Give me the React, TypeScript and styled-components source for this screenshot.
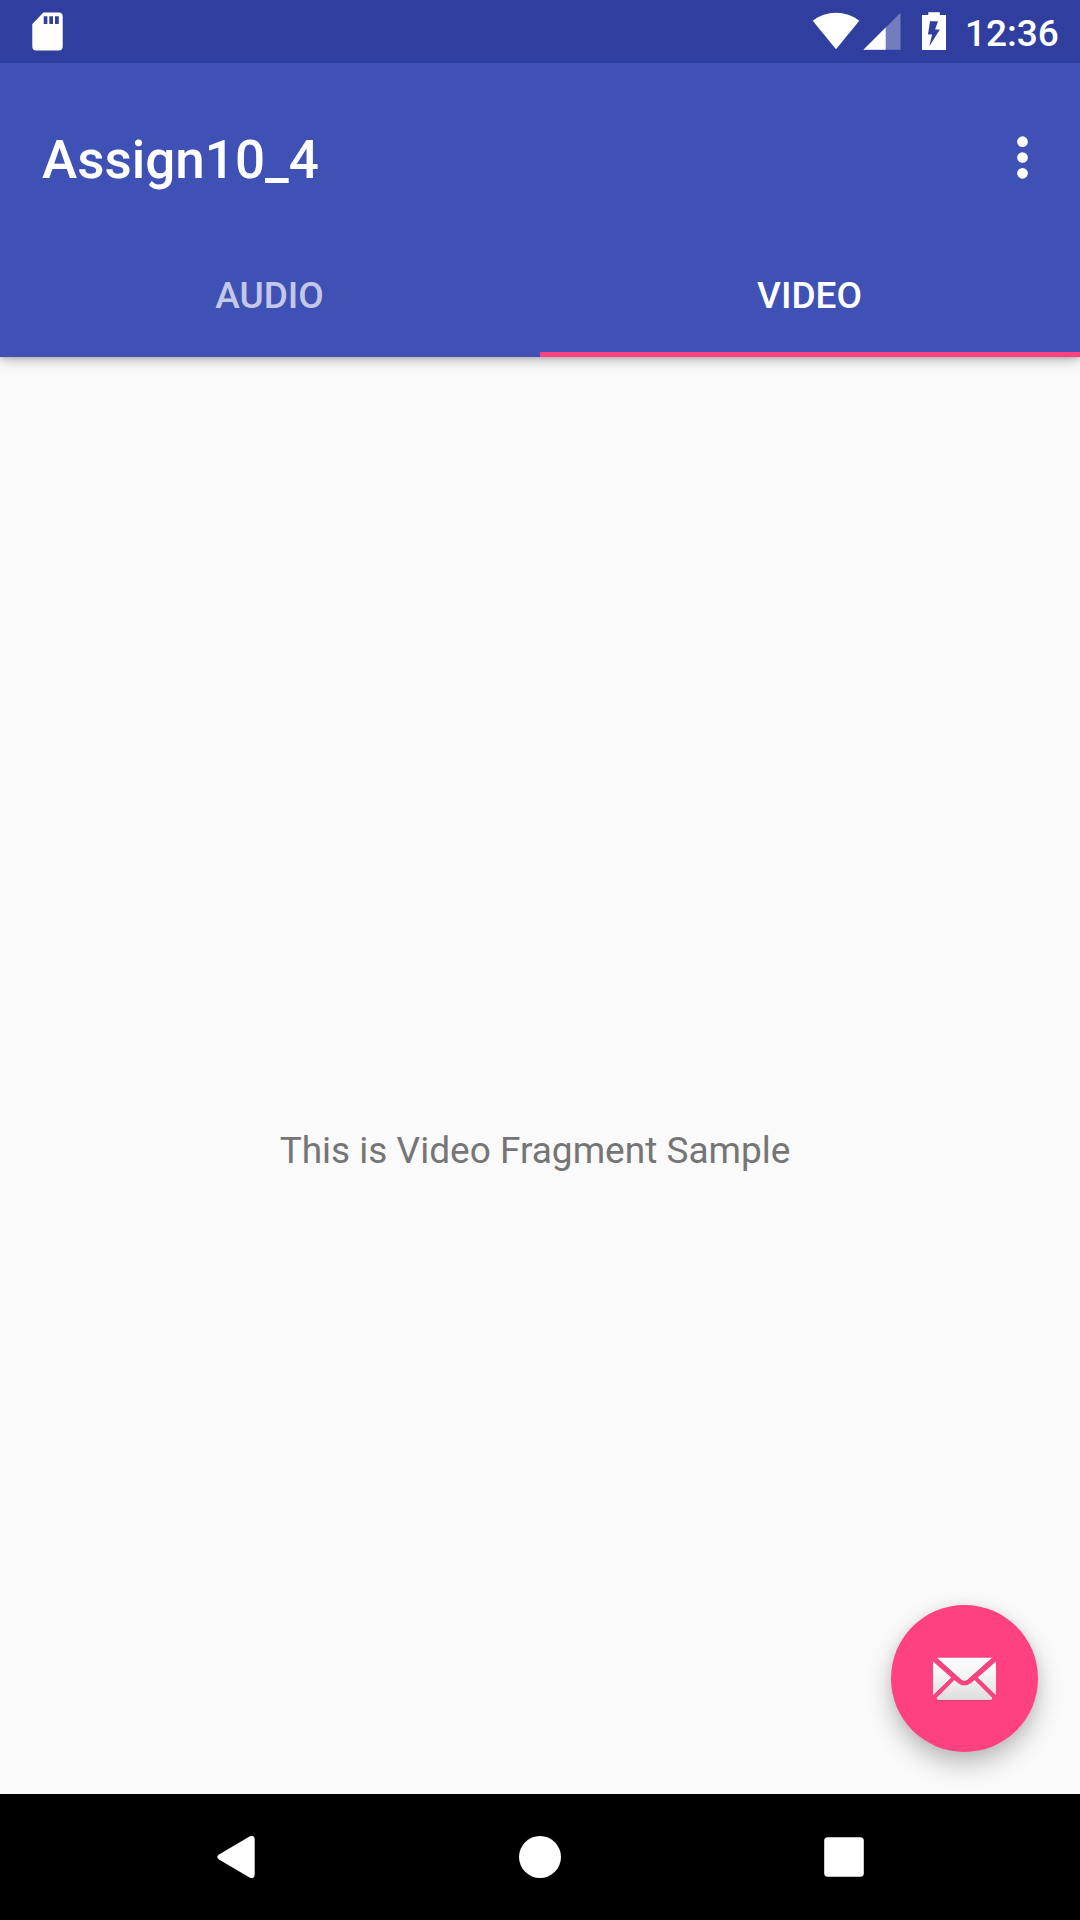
import React from "react";
import styled, { createGlobalStyle } from "styled-components";

const GlobalStyle = createGlobalStyle`
  *, *::before, *::after { box-sizing: border-box; }
  body { margin: 0; background: #fafafa; font-family: Roboto, "Liberation Sans", sans-serif; }
  svg { display: block; flex: none; }
`;

const Screen = styled.div`
  display: flex;
  flex-direction: column;
  width: 1080px;
  height: 1920px;
  overflow: hidden;
  background: #fafafa;
`;

const StatusBar = styled.header`
  position: relative;
  z-index: 2;
  display: flex;
  justify-content: space-between;
  flex: none;
  height: 63px;
  padding: 0 21px 0 28px;
  background: #303f9f;
`;

const StatusGroup = styled.div`
  display: flex;
  align-items: center;
`;

const Clock = styled.time`
  width: 94px;
  margin-left: 17px;
  padding-top: 4px;
  color: #fff;
  font-size: 37px;
  font-weight: 500;
  line-height: 43px;
  white-space: nowrap;
`;

const AppBar = styled.div`
  position: relative;
  z-index: 1;
  flex: none;
  height: 294px;
  padding-top: 21px;
  background: #3f51b5;
  box-shadow: 0 3px 12px rgba(0, 0, 0, 0.27), 0 1px 4px rgba(0, 0, 0, 0.14);
`;

const Toolbar = styled.div`
  display: flex;
  align-items: center;
  justify-content: space-between;
  height: 147px;
  padding-left: 42px;
`;

const Title = styled.h1`
  margin: 0;
  padding-top: 5px;
  color: #fff;
  font-size: 53px;
  font-weight: 500;
  line-height: 62px;
`;

const IconButton = styled.button<{ $width: number }>`
  display: flex;
  align-items: center;
  justify-content: center;
  width: ${({ $width }) => $width}px;
  height: 126px;
  padding: 0;
  border: 0;
  background: transparent;
`;

const TabRow = styled.nav`
  display: grid;
  grid-template-columns: 1fr 1fr;
  height: 126px;
`;

const Tab = styled.button<{ $active?: boolean }>`
  padding: 8px 1px 0 0;
  border: 0;
  border-bottom: 5px solid ${({ $active }) => ($active ? "#ff4081" : "transparent")};
  background: transparent;
  color: ${({ $active }) => ($active ? "#fff" : "rgba(255, 255, 255, 0.7)")};
  font: 500 37px/43px Roboto, "Liberation Sans", sans-serif;
`;

const Content = styled.main`
  position: relative;
  display: flex;
  flex: 1;
  align-items: center;
  justify-content: center;
`;

const Message = styled.p`
  margin: 0;
  padding: 150px 10px 0 0;
  color: #757575;
  font-size: 37px;
  line-height: 43px;
  white-space: nowrap;
`;

const ComposeButton = styled.button`
  position: absolute;
  right: 42px;
  bottom: 42px;
  display: flex;
  align-items: center;
  justify-content: center;
  width: 147px;
  height: 147px;
  padding: 0;
  border: 0;
  border-radius: 50%;
  background: #ff4081;
  box-shadow: 0 12px 24px rgba(0, 0, 0, 0.25), 0 0 12px rgba(0, 0, 0, 0.06);
`;

const NavigationBar = styled.footer`
  position: relative;
  z-index: 1;
  display: flex;
  flex: none;
  align-items: center;
  justify-content: center;
  gap: 94px;
  height: 126px;
  background: #000;
`;

const SdCard = () => (
  <svg width="40" height="63" viewBox="28 0 40 63">
    <path fill="#fff" fillRule="evenodd" d="M43.400 12.500H58.700a4 4 0 0 1 4 4V46.600a4 4 0 0 1-4 4H36.300a4 4 0 0 1-4-4V24ZM43.700 16.300V24h3.700v-7.700ZM49.300 16.300V24H53v-7.700ZM55 16.300V24h3.800v-7.700Z" />
  </svg>
);

const StatusIcons = () => (
  <svg width="138" height="63" viewBox="810 0 138 63">
    <path fill="#fff" d="M812.700 20.800C826 10.100 846 10.100 859.300 20.800L836 49.300Z" />
    <path fill="#fff" fillOpacity=".32" d="M900.500 12.700V49.800H863.400Z" />
    <path fill="#fff" d="M885.700 27.500V49.800H863.400Z" />
    <path fill="#fff" fillRule="evenodd" d="M928.300 12.300h11.500V15.100H946V49.900H922V15.100h6.300ZM930 21.200L928 34.500h4.100L929.200 46.600 939.800 29.500h-4.700L938 21.200Z" />
  </svg>
);

const Overflow = () => (
  <svg width="17" height="46" viewBox="0 0 17 46" fill="#fff">
    <circle cx="8.500" cy="6.700" r="5.350" />
    <circle cx="8.500" cy="22.500" r="5.350" />
    <circle cx="8.500" cy="38.300" r="5.350" />
  </svg>
);

const Envelope = () => (
  <svg width="65" height="49" viewBox="932 1654 65 49">
    <defs>
      <linearGradient id="paper" gradientUnits="userSpaceOnUse" x1="0" y1="1657" x2="0" y2="1701">
        <stop offset="0" stopColor="#fff" />
        <stop offset=".4" stopColor="#f5f5f5" />
        <stop offset="1" stopColor="#dcdcdc" />
      </linearGradient>
      <filter id="edge" x="-10%" y="-10%" width="120%" height="120%">
        <feDropShadow dx="0" dy=".4" stdDeviation=".5" floodColor="#444" floodOpacity=".6" />
      </filter>
    </defs>
    <g fill="url(#paper)" filter="url(#edge)">
      <path d="M937 1657.700H992L967.300 1679.700Q964.400 1682 961.500 1679.700Z" />
      <path d="M933 1661.500L951.200 1677.500 933 1695.200Z" />
      <path d="M996 1661.500V1695.200L977.800 1677.500Z" />
      <path d="M954.400 1679.900L958.200 1683.200Q964.500 1688 970.800 1683.200L974.500 1679.900 992.200 1697.800Q992.700 1699.900 990.500 1699.900H938.500Q936.300 1699.900 936.800 1697.800Z" />
    </g>
  </svg>
);

const BackIcon = () => (
  <svg width="38" height="42" viewBox="217 1836 38 42">
    <path fill="#fff" d="M219 1854.600L249.500 1836.500Q254.700 1834.500 254.700 1839.500V1874.500Q254.700 1879.500 249.500 1877.500L219 1859.400Q215.500 1857 219 1854.600Z" />
  </svg>
);

const HomeIcon = () => (
  <svg width="42" height="42" viewBox="0 0 42 42">
    <circle cx="21" cy="21" r="21" fill="#fff" />
  </svg>
);

const RecentsIcon = () => (
  <svg width="40" height="40" viewBox="0 0 40 40">
    <rect x=".2" y=".2" width="39.600" height="39.600" rx="3.500" fill="#fff" />
  </svg>
);

export default function App() {
  return (
    <>
      <GlobalStyle />
      <Screen>
        <StatusBar>
          <StatusGroup>
            <SdCard />
          </StatusGroup>
          <StatusGroup>
            <StatusIcons />
            <Clock>12:36</Clock>
          </StatusGroup>
        </StatusBar>
        <AppBar>
          <Toolbar>
            <Title>Assign10_4</Title>
            <IconButton $width={115} aria-label="More options">
              <Overflow />
            </IconButton>
          </Toolbar>
          <TabRow>
            <Tab>AUDIO</Tab>
            <Tab $active>VIDEO</Tab>
          </TabRow>
        </AppBar>
        <Content>
          <Message>This is Video Fragment Sample</Message>
          <ComposeButton aria-label="Compose">
            <Envelope />
          </ComposeButton>
        </Content>
        <NavigationBar>
          <IconButton $width={210} aria-label="Back">
            <BackIcon />
          </IconButton>
          <IconButton $width={210} aria-label="Home">
            <HomeIcon />
          </IconButton>
          <IconButton $width={210} aria-label="Recent apps">
            <RecentsIcon />
          </IconButton>
        </NavigationBar>
      </Screen>
    </>
  );
}
